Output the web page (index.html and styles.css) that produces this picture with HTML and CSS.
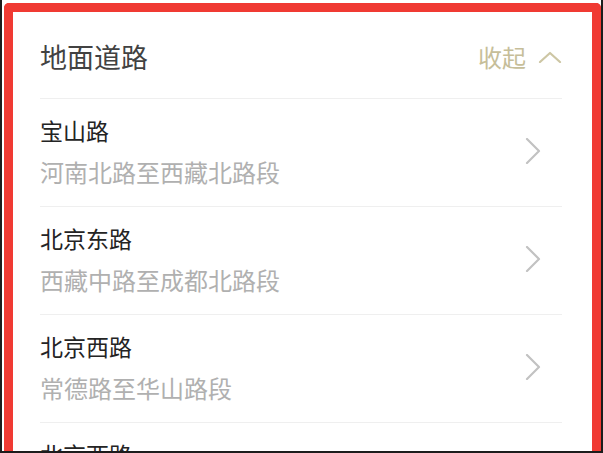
FILE: index.html
```html
<!DOCTYPE html>
<html lang="zh-CN">
<head>
  <meta charset="UTF-8" />
  <title>地面道路</title>
  <link rel="stylesheet" href="styles.css">
</head>
<body>
  <div class="screen">
    <div class="frame">
      <div class="panel">
        <div class="panel-head">
          <h2>地面道路</h2>
          <span class="toggle">收起
            <svg width="24" height="12" viewBox="0 0 24 12"><polyline points="2,11 12,2 22,11" /></svg>
          </span>
        </div>

        <div class="road">
          <div class="road-text">
            <p class="road-name">宝山路</p>
            <p class="road-range">河南北路至西藏北路段</p>
          </div>
          <svg class="arrow" width="16" height="26" viewBox="0 0 16 26"><polyline points="2,1 14,13 2,25" /></svg>
        </div>

        <div class="road">
          <div class="road-text">
            <p class="road-name">北京东路</p>
            <p class="road-range">西藏中路至成都北路段</p>
          </div>
          <svg class="arrow" width="16" height="26" viewBox="0 0 16 26"><polyline points="2,1 14,13 2,25" /></svg>
        </div>

        <div class="road">
          <div class="road-text">
            <p class="road-name">北京西路</p>
            <p class="road-range">常德路至华山路段</p>
          </div>
          <svg class="arrow" width="16" height="26" viewBox="0 0 16 26"><polyline points="2,1 14,13 2,25" /></svg>
        </div>

        <div class="road">
          <div class="road-text">
            <p class="road-name">北京西路</p>
            <p class="road-range">胶州路至延安西路段</p>
          </div>
          <svg class="arrow" width="16" height="26" viewBox="0 0 16 26"><polyline points="2,1 14,13 2,25" /></svg>
        </div>
      </div>
    </div>
  </div>
</body>
</html>
```

FILE: styles.css
```css
html, body {
  margin: 0;
  background: #fff;
  font-family: "Noto Sans CJK SC", "Noto Sans", sans-serif;
}

.screen {
  height: 453px;
  box-sizing: border-box;
  border: 2px solid #1c1c1c;
  border-top: 0;
  padding: 3px 0 0 2px;
  overflow: hidden;
}

.frame {
  border: 9px solid #f03a33;
  border-bottom: 0;
  border-radius: 5px 5px 0 0;
  height: 600px;
  background: #fff;
}

.panel {
  padding: 0 30px 0 27px;
}

.panel-head {
  display: flex;
  align-items: center;
  justify-content: space-between;
  padding: 27px 0 23px;
  border-bottom: 1px solid #efefef;
}

.panel-head h2 {
  margin: 0;
  font-size: 27px;
  line-height: 36px;
  font-weight: 400;
  color: #424242;
}

.toggle {
  display: flex;
  align-items: center;
  gap: 12px;
  font-size: 24px;
  line-height: 36px;
  color: #c6be99;
}

.toggle svg polyline {
  fill: none;
  stroke: #cdc6a4;
  stroke-width: 2.2;
  stroke-linecap: round;
  stroke-linejoin: round;
}

.road {
  display: flex;
  align-items: center;
  justify-content: space-between;
  padding: 16px 0 19px;
  border-bottom: 1px solid #efefef;
}

.road-text p {
  margin: 0;
  line-height: 30px;
}

.road-name {
  font-size: 23px;
  color: #242424;
  font-weight: 400;
}

.road .road-range {
  margin-top: 12px;
  font-size: 24px;
  color: #b0b0b0;
}

.arrow {
  margin-right: 21px;
}

.arrow polyline {
  fill: none;
  stroke: #c2c2c2;
  stroke-width: 2.2;
  stroke-linecap: round;
  stroke-linejoin: round;
}
```
